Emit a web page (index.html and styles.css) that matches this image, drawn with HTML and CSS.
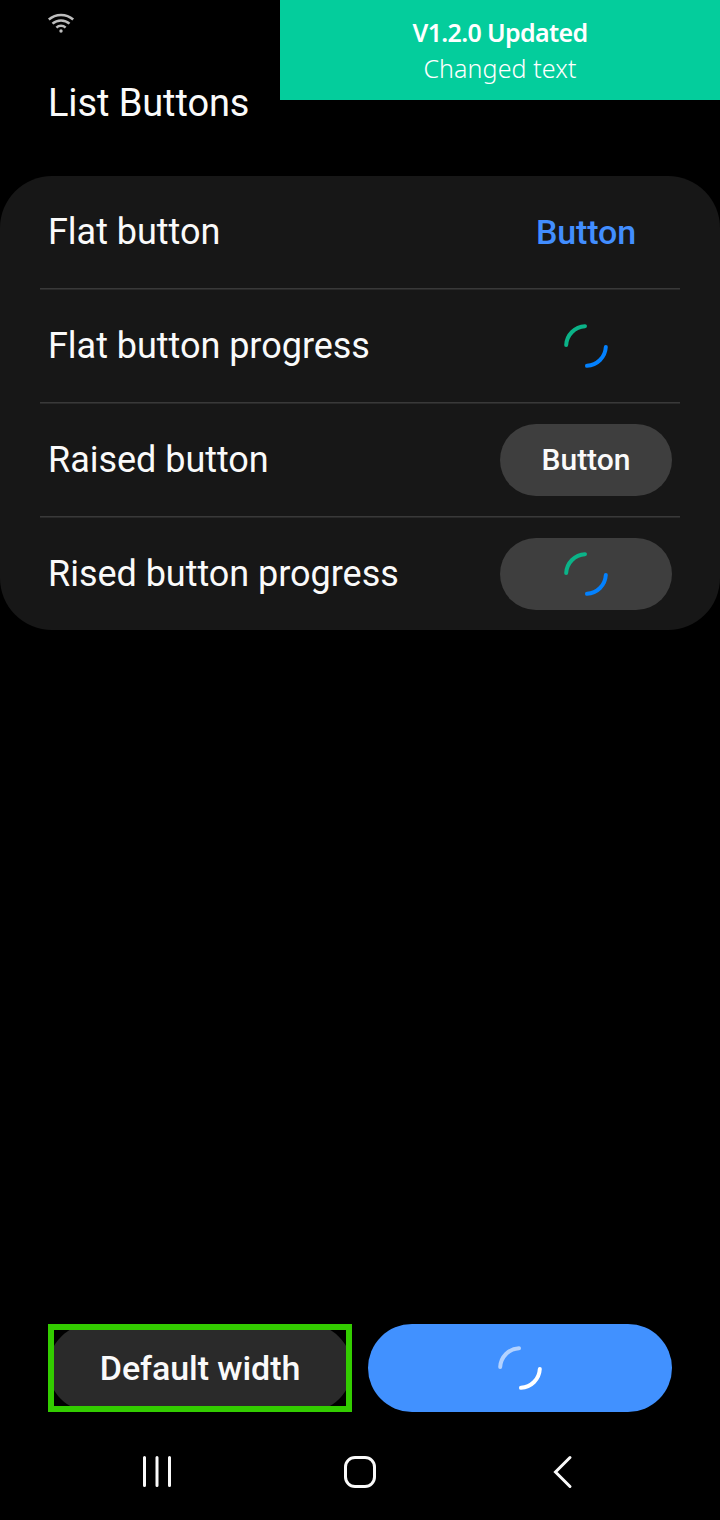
FILE: index.html
```html
<!DOCTYPE html>
<html lang="en">
<head>
<meta charset="utf-8">
<title>List Buttons</title>
<link rel="stylesheet" href="styles.css">
</head>
<body>
<div class="screen">
  <header class="header">
    <svg class="wifi" viewBox="0 0 28 20"><g fill="none" stroke="#bdbdbd" stroke-width="2.5"><path d="M1.800 6.500a18.500 18.500 0 0 1 24.400 0"/><path d="M5.500 10.700a12.600 12.600 0 0 1 17 0"/><path d="M9.400 14.600a6.700 6.700 0 0 1 9.200 0"/></g><circle cx="14" cy="18" r="1.700" fill="#bdbdbd"/></svg>
    <h1 class="title">List Buttons</h1>
  </header>
  <aside class="notice"><strong class="notice-title">V1.2.0 Updated</strong><span class="notice-text">Changed text</span></aside>
  <main class="list">
    <div class="row"><span class="label">Flat button</span><button class="flat">Button</button></div>
    <div class="row"><span class="label">Flat button progress</span><span class="flat"><svg class="spinner" viewBox="0 0 48 48"><path class="green" d="M4.200 23A19.800 19.800 0 0 1 23 4.200"/><path class="blue" d="M43.800 25A19.800 19.800 0 0 1 25 43.800"/></svg></span></div>
    <div class="row"><span class="label">Raised button</span><button class="raised">Button</button></div>
    <div class="row"><span class="label">Rised button progress</span><span class="raised"><svg class="spinner" viewBox="0 0 48 48"><path class="green" d="M4.200 23A19.800 19.800 0 0 1 23 4.200"/><path class="blue" d="M43.800 25A19.800 19.800 0 0 1 25 43.800"/></svg></span></div>
  </main>
  <div class="actions">
    <div class="outlined"><button class="default">Default width</button></div>
    <div class="primary"><svg class="spinner" viewBox="0 0 48 48"><path class="pale" d="M4.200 23A19.800 19.800 0 0 1 23 4.200"/><path class="white" d="M43.800 25A19.800 19.800 0 0 1 25 43.800"/></svg></div>
  </div>
  <nav class="nav">
    <svg viewBox="0 0 36 36"><path d="M5.500 3.500v28M18 3.500v28M30.500 3.500v28"/></svg>
    <svg viewBox="0 0 36 36"><rect x="3.500" y="3.500" width="29" height="29" rx="9.500"/></svg>
    <svg viewBox="0 0 36 36"><path d="M25 3.500L10.500 18L25 32.500"/></svg>
  </nav>
</div>
</body>
</html>
```
FILE: styles.css
```css
* { box-sizing: border-box; }
body { margin: 0; background: #000; color: #fafafa; font-family: Roboto, sans-serif; }
button { border: 0; padding: 0; background: none; color: inherit; font-family: inherit; }
.screen { position: relative; width: 720px; height: 1520px; display: flex; flex-direction: column; background: #000; }
.header { height: 176px; padding: 12px 47px 0; }
.wifi { display: block; width: 28px; height: 22px; }
.title { margin: 47px 0 0 1px; font-size: 38px; line-height: 44px; font-weight: 400; letter-spacing: -0.1px; white-space: nowrap; }
.notice { position: absolute; top: 0; right: 0; width: 440px; height: 100px; padding-top: 14px; display: flex; flex-direction: column; align-items: center; background: #04cd9c; color: #fff; font-family: "Noto Sans", sans-serif; font-size: 25px; line-height: 36px; }
.notice-title { font-weight: 600; letter-spacing: -0.65px; }
.notice-text { font-weight: 300; letter-spacing: 0.1px; }
.list { height: 454px; border-radius: 52px; background: #171717; }
.row { height: 114px; margin: 0 40px; padding: 0 8px 2px; display: flex; align-items: center; justify-content: space-between; background: linear-gradient(#393939 50%, #292929 50%) bottom / 100% 2px no-repeat; }
.row:last-child { background: none; padding-bottom: 0; height: 112px; }
.label { font-size: 36px; line-height: 44px; letter-spacing: -0.03px; white-space: nowrap; }
.flat, .raised { width: 172px; height: 72px; display: flex; align-items: center; justify-content: center; font-weight: 500; }
.flat { color: #428eff; font-size: 34px; letter-spacing: -0.1px; }
.raised { border-radius: 36px; background: #3e3e3e; font-size: 30px; }
button.raised { padding-bottom: 2px; }
.spinner { width: 48px; height: 48px; fill: none; stroke-width: 4; stroke-linecap: round; }
.green { stroke: #0bb388; }
.blue { stroke: #0381fe; }
.pale { stroke: #b3d2ff; }
.white { stroke: #fff; }
.actions { margin-top: auto; height: 88px; padding: 0 48px; display: grid; grid-template-columns: 1fr 1fr; gap: 16px; }
.outlined { outline: 6px solid #3c0; outline-offset: -6px; display: flex; }
.default { width: 100%; height: 100%; border-radius: 44px; background: #2a2a2a; font-size: 34px; letter-spacing: -0.07px; font-weight: 500; white-space: nowrap; }
.primary { border-radius: 44px; background: #4191ff; display: flex; align-items: center; justify-content: center; }
.nav { height: 108px; padding: 12px 139px 0; display: flex; align-items: center; justify-content: space-between; }
.nav svg { width: 36px; height: 36px; fill: none; stroke: #fafafa; stroke-width: 3; stroke-linecap: round; }
```
